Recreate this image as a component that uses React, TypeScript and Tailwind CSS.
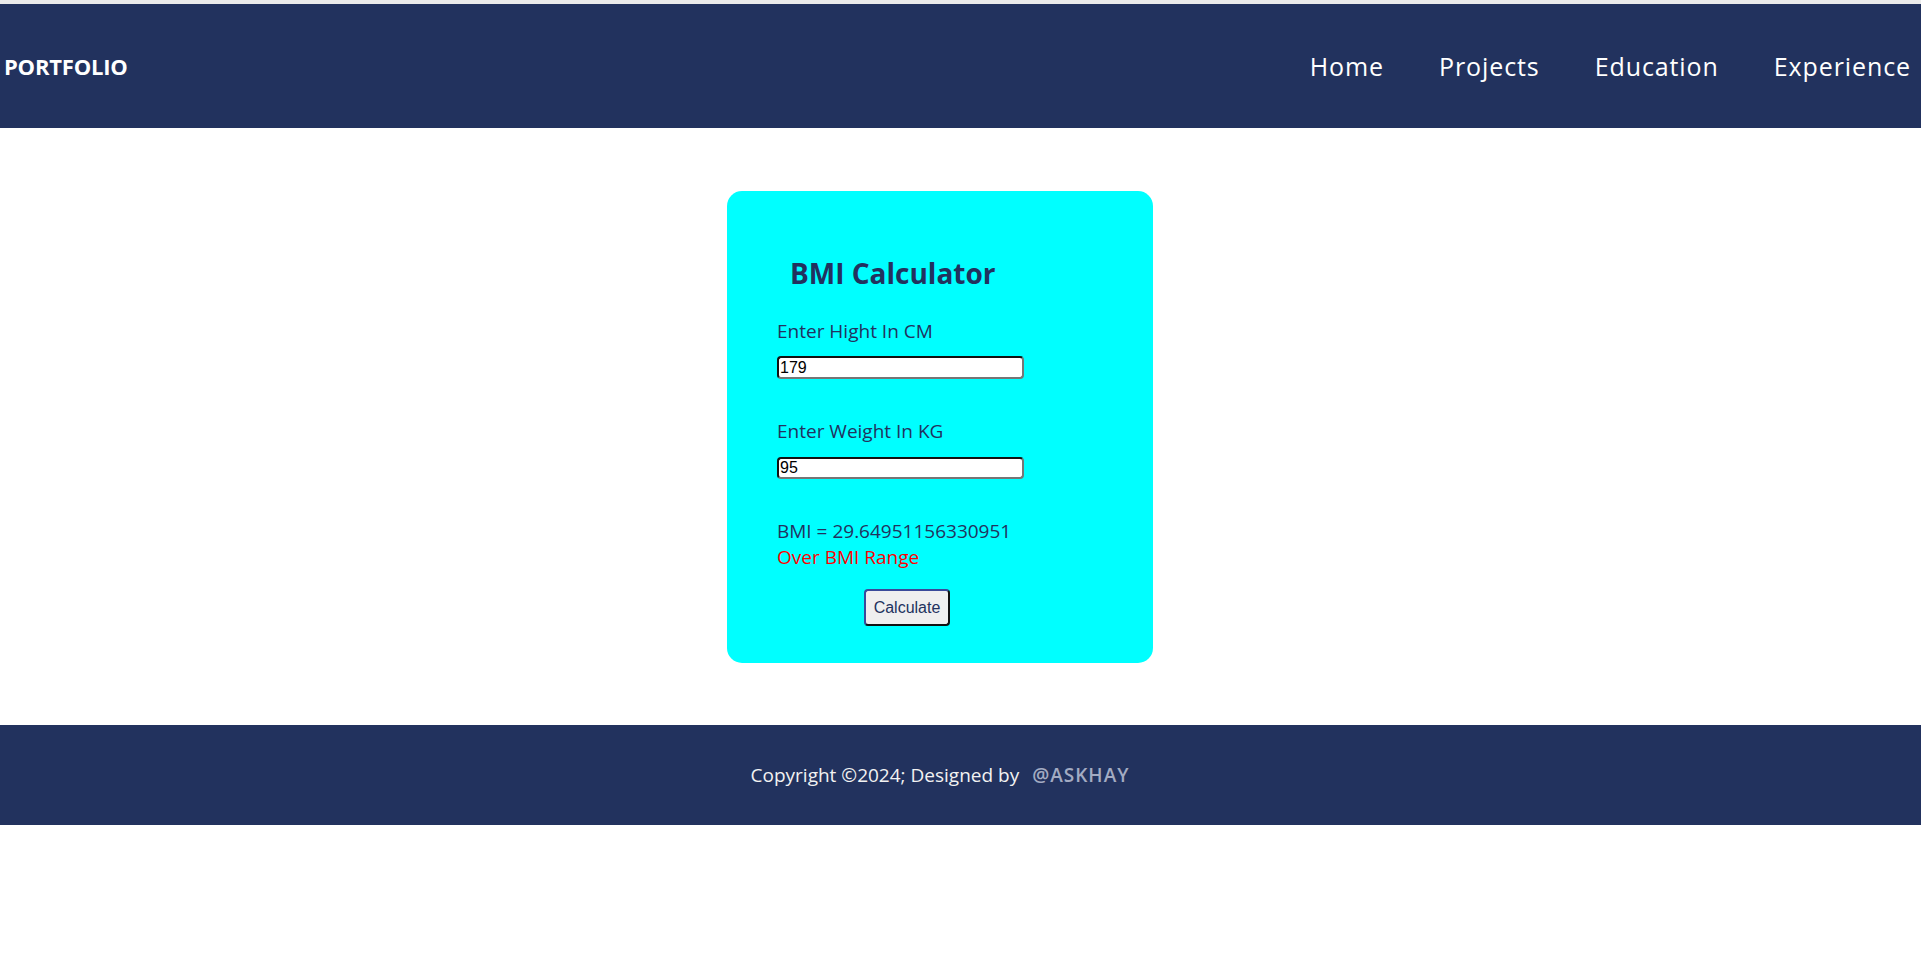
import React from "react";

export default function App() {
  return (
    <div className="min-h-[961px] w-full bg-white" style={{ fontFamily: '"Open Sans", "Noto Sans", sans-serif' }}>
      <div className="h-[4px] bg-[#ebebeb]" />
      <header className="flex h-[124px] items-center justify-between bg-[#22325e] pl-[4px] pr-[10px]">
        <div className="text-[22px] font-bold leading-none tracking-[-0.2px] text-white">PORTFOLIO</div>
        <nav className="flex items-center gap-[55px] text-[25px] leading-none tracking-[0.9px] text-white">
          <a>Home</a>
          <a>Projects</a>
          <a>Education</a>
          <a>Experience</a>
        </nav>
      </header>

      <main className="flex justify-center pr-[41px] pt-[63px] pb-[62px]">
        <div className="flex h-[472px] w-[426px] flex-col rounded-[15px] bg-[#00ffff] pl-[50px]">
          <h1 className="ml-[13px] mt-[67px] text-[28px] font-bold leading-[30px] text-[#22325e]">BMI Calculator</h1>
          <label className="mt-[34px] text-[19px] leading-[18px] text-[#22325e]">Enter Hight In CM</label>
          <input
            readOnly
            value="179"
            className="mt-[16px] h-[23px] w-[247px] rounded-[4px] border-2 border-t-[#111] border-l-[#111] border-b-[#767676] border-r-[#767676] bg-white px-[1px] text-[16px] text-black outline-none"
            style={{ fontFamily: '"Liberation Sans", Arial, sans-serif' }}
          />
          <label className="mt-[43px] text-[19px] leading-[18px] text-[#22325e]">Enter Weight In KG</label>
          <input
            readOnly
            value="95"
            className="mt-[17px] h-[22px] w-[247px] rounded-[4px] border-2 border-t-[#111] border-l-[#111] border-b-[#767676] border-r-[#767676] bg-white px-[1px] text-[16px] text-black outline-none"
            style={{ fontFamily: '"Liberation Sans", Arial, sans-serif' }}
          />
          <p className="mt-[43px] text-[19px] leading-[18px] text-[#22325e]">BMI = 29.64951156330951</p>
          <p className="mt-[8px] text-[19px] leading-[18px] text-[#ff0000]">Over BMI Range</p>
          <button
            className="ml-[87px] mt-[23px] h-[37px] w-[86px] rounded-[4px] border-2 border-t-[#3a4a9a] border-l-[#3a4a9a] border-b-[#111] border-r-[#111] bg-[#efefef] text-[16px] text-[#22325e]"
            style={{ fontFamily: '"Liberation Sans", Arial, sans-serif' }}
          >
            Calculate
          </button>
        </div>
      </main>

      <footer className="flex h-[100px] items-center justify-center bg-[#22325e] pr-[41px] text-[19px] leading-none">
        <span className="text-[#f2f2f2]">Copyright ©2024; Designed by</span>
        <span className="ml-[13px] font-semibold tracking-[1px] text-[#a3abc2]">@ASKHAY</span>
      </footer>
    </div>
  );
}
